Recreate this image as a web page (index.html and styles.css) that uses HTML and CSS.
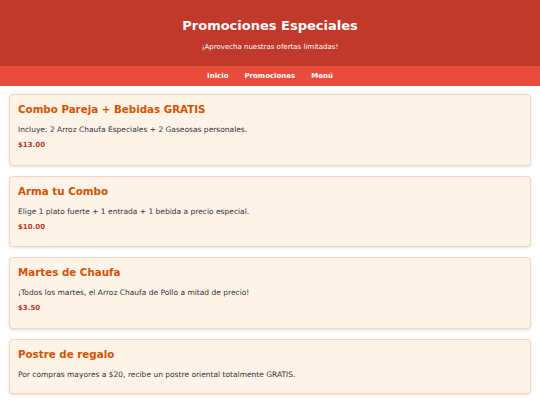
FILE: index.html
```html
<!DOCTYPE html>
<html lang="es">

<head>
    <meta charset="UTF-8">
    <meta name="viewport" content="width=device-width, initial-scale=1.0">
    <title>Promociones Especiales</title>
    <link rel="stylesheet" href="styles.css">
</head>

<body>
    <header class="top-header">
        <h1>Promociones Especiales</h1>
        <p>¡Aprovecha nuestras ofertas limitadas!</p>
    </header>

    <nav class="main-nav">
        <a href="#">Inicio</a>
        <a href="#">Promociones</a>
        <a href="#">Menú</a>
    </nav>

    <main class="promo-list">
        <div class="promo-card">
            <h2>Combo Pareja + Bebidas GRATIS</h2>
            <p>Incluye: 2 Arroz Chaufa Especiales + 2 Gaseosas personales.</p>
            <p class="price">$13.00</p>
        </div>

        <div class="promo-card">
            <h2>Arma tu Combo</h2>
            <p>Elige 1 plato fuerte + 1 entrada + 1 bebida a precio especial.</p>
            <p class="price">$10.00</p>
        </div>

        <div class="promo-card">
            <h2>Martes de Chaufa</h2>
            <p>¡Todos los martes, el Arroz Chaufa de Pollo a mitad de precio!</p>
            <p class="price">$3.50</p>
        </div>

        <div class="promo-card">
            <h2>Postre de regalo</h2>
            <p>Por compras mayores a $20, recibe un postre oriental totalmente GRATIS.</p>
        </div>
    </main>
</body>

</html>
```

FILE: styles.css
```css
body {
    font-family: "DejaVu Sans", Verdana, sans-serif;
    margin: 0;
    background-color: white;
    color: #333;
}

.top-header {
    background-color: #c0392b;
    color: white;
    text-align: center;
    padding: 18px 10px 14px;
}

.top-header h1 {
    margin: 0;
    font-size: 13px;
    line-height: 15px;
}

.top-header p {
    margin: 10px 0 0;
    font-size: 7px;
    line-height: 9px;
}

.main-nav {
    background-color: #e74c3c;
    height: 20px;
    display: flex;
    justify-content: center;
    align-items: center;
    gap: 16px;
}

.main-nav a {
    color: white;
    text-decoration: none;
    font-weight: bold;
    font-size: 7px;
}

.promo-list {
    padding: 8px 9px;
    display: flex;
    flex-direction: column;
    gap: 10px;
}

.promo-card {
    background-color: #fef3e8;
    border: 1px solid #f5d5bd;
    border-radius: 4px;
    box-shadow: 0 1px 3px rgba(0, 0, 0, 0.12);
    padding: 8px 8px 14.5px;
}

.promo-card h2 {
    margin: 0 0 10px;
    color: #d35400;
    font-size: 10.3px;
    line-height: 12px;
}

.promo-card p {
    margin: 0 0 7px;
    font-size: 7.5px;
    line-height: 9px;
}

.promo-card p:last-child {
    margin-bottom: 0;
}

.promo-card .price {
    color: #c0392b;
    font-weight: bold;
    font-size: 7px;
}
```
